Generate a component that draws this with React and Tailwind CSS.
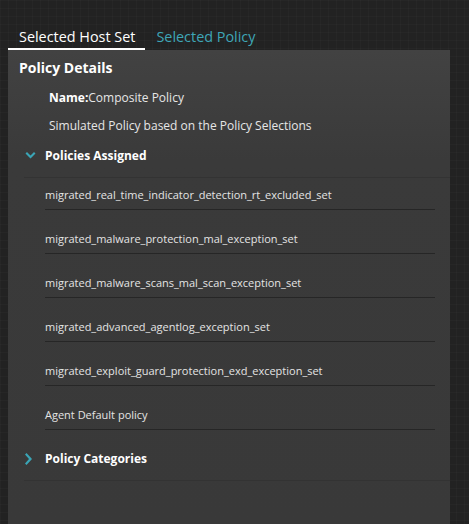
import React from 'react';

const policies = [
  'migrated_real_time_indicator_detection_rt_excluded_set',
  'migrated_malware_protection_mal_exception_set',
  'migrated_malware_scans_mal_scan_exception_set',
  'migrated_advanced_agentlog_exception_set',
  'migrated_exploit_guard_protection_exd_exception_set',
  'Agent Default policy',
];

const ChevronDown = () => (
  <svg width="11" height="8" viewBox="0 0 11 8" className="block">
    <path d="M0.5 1.5 L2 0 L5.5 3.5 L9 0 L10.5 1.5 L5.5 6.5 Z" fill="#3aa5b6" />
  </svg>
);

const ChevronRight = () => (
  <svg width="8" height="12" viewBox="0 0 8 12" className="block">
    <path d="M1.5 0 L0 1.5 L4 6 L0 10.5 L1.5 12 L7 6 Z" fill="#3aa5b6" />
  </svg>
);

const SectionHeader = ({ open, title }) => (
  <div className="flex items-center ml-[16px] pb-[12px] border-b border-[#333333]">
    <div className="w-[21px] pl-[1px] flex items-center">{open ? <ChevronDown /> : <ChevronRight />}</div>
    <span className="text-[12px] leading-[18px] font-bold text-white">{title}</span>
  </div>
);

export default function App() {
  return (
    <div
      className="min-h-screen w-[469px] overflow-hidden bg-[#222222] bg-[linear-gradient(rgba(255,255,255,0.018)_1px,transparent_1px),linear-gradient(90deg,rgba(255,255,255,0.018)_1px,transparent_1px)] bg-[size:8px_8px] pt-[27px]"
      style={{ fontFamily: '"Open Sans", "DejaVu Sans", sans-serif' }}
    >
      <div className="flex ml-[8px]">
        <div className="pl-[11px] pr-[10px] pb-[1px] border-b-2 border-white text-[14.4px] leading-[20px] text-white">
          Selected Host Set
        </div>
        <div className="px-[11px] text-[14.4px] leading-[20px] text-[#3ea6b7]">Selected Policy</div>
      </div>

      <div className="ml-[8px] w-[442px] h-[474px] bg-[linear-gradient(to_bottom,#424242,#3a3a3a_110px,#393939)] pt-[8px]">
        <div className="pl-[11px] text-[14px] leading-[20px] font-bold text-white">Policy Details</div>

        <div className="pl-[41px] mt-[11px] text-[12px] leading-[18px] text-[#e6e6e6]">
          <span className="font-bold text-white">Name:</span>Composite Policy
        </div>
        <div className="pl-[41px] mt-[10px] text-[12px] leading-[18px] text-[#e6e6e6]">
          Simulated Policy based on the Policy Selections
        </div>

        <div className="mt-[12px]">
          <SectionHeader open title="Policies Assigned" />
        </div>

        <div className="pt-[8px] pl-[37px] pr-[15px]">
          {policies.map((p, i) => (
            <div
              key={i}
              className={`${i === 0 ? '' : 'mt-[20px]'} pb-[5px] border-b border-[#262626] text-[11px] leading-[18px] text-[#e4e4e4]`}
            >
              {p}
            </div>
          ))}
        </div>

        <div className="mt-[20px]">
          <SectionHeader title="Policy Categories" />
        </div>
      </div>
    </div>
  );
}
